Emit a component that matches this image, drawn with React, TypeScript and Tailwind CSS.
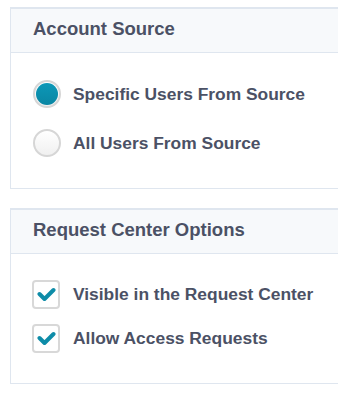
const font = { fontFamily: '"Liberation Sans", Arial, sans-serif' };

function Radio({ checked }: { checked?: boolean }) {
  return (
    <span className="flex h-[28px] w-[28px] shrink-0 items-center justify-center rounded-full border-2 border-[#d6d6d6] bg-gradient-to-b from-white to-[#f0f0f0]">
      {checked && (
        <span className="h-[22px] w-[22px] rounded-full bg-gradient-to-b from-[#0c98b8] to-[#0a86a3]" />
      )}
    </span>
  );
}

function Checkbox() {
  return (
    <span className="flex h-[29px] w-[28px] shrink-0 items-center justify-center rounded-[4px] border-2 border-[#d8d8d8] bg-white">
      <svg width="19" height="15" viewBox="0 0 19 15" fill="none">
        <path
          d="M2.5 7 L7.5 12 L16.5 3"
          stroke="#0e8ca8"
          strokeWidth="4"
          strokeLinecap="round"
          strokeLinejoin="round"
        />
      </svg>
    </span>
  );
}

function Panel({ title, children, className }: { title: string; children: React.ReactNode; className?: string }) {
  return (
    <section className={`w-[400px] border border-t-2 border-[#dfe6ef] bg-white ${className ?? ""}`}>
      <div className="flex h-[44px] items-center border-b border-[#dfe6ef] bg-[#f7f9fb] pb-[3px] pl-[22px]">
        <h2 className="text-[18.5px] font-bold text-[#4b5165]">{title}</h2>
      </div>
      {children}
    </section>
  );
}

export default function App() {
  return (
    <div className="h-[400px] w-[338px] overflow-hidden bg-white pl-[10px] pt-[7px]" style={font}>
      <Panel title="Account Source">
        <div className="flex flex-col gap-[21px] pb-[31px] pl-[22px] pt-[27px]">
          <label className="flex items-center gap-[12px]">
            <Radio checked />
            <span className="text-[17.4px] font-bold text-[#4b5165]">Specific Users From Source</span>
          </label>
          <label className="flex items-center gap-[12px]">
            <Radio />
            <span className="text-[17.4px] font-bold text-[#4b5165]">All Users From Source</span>
          </label>
        </div>
      </Panel>

      <Panel title="Request Center Options" className="mt-[19px]">
        <div className="flex flex-col gap-[15px] pb-[30px] pl-[21px] pt-[26px]">
          <label className="flex items-center gap-[13px]">
            <Checkbox />
            <span className="text-[17.4px] font-bold text-[#4b5165]">Visible in the Request Center</span>
          </label>
          <label className="flex items-center gap-[13px]">
            <Checkbox />
            <span className="text-[17.4px] font-bold text-[#4b5165]">Allow Access Requests</span>
          </label>
        </div>
      </Panel>
    </div>
  );
}
